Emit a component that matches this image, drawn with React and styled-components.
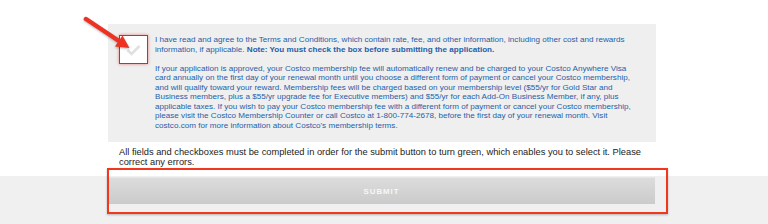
import React from 'react';
import styled, { createGlobalStyle } from 'styled-components';

const GlobalStyle = createGlobalStyle`
  html, body {
    margin: 0;
    padding: 0;
    background: #fff;
  }
  body {
    font-family: "Liberation Sans", Arial, sans-serif;
  }
`;

const Page = styled.div`
  position: relative;
  width: 768px;
  height: 224px;
  overflow: hidden;
  background: #fff;
`;

const TopArea = styled.section`
  padding-top: 24px;
`;

const Panel = styled.div`
  display: flex;
  align-items: flex-start;
  gap: 7px;
  margin-left: 108px;
  width: 548px;
  box-sizing: border-box;
  padding: 11px 0 12px 11px;
  background: #efefef;
`;

const CheckBox = styled.div`
  flex: none;
  display: flex;
  align-items: center;
  justify-content: center;
  width: 29px;
  height: 29px;
  box-sizing: border-box;
  background: #fff;
  border: 1px solid #d8262b;
  box-shadow: 0 0 3px rgba(220, 40, 40, 0.55);
`;

const Terms = styled.div`
  color: #1f5ea8;
  font-size: 8.1px;
  line-height: 9.5px;
`;

const Para = styled.p`
  margin: 0 0 9.5px;
  &:last-child {
    margin-bottom: 0;
  }
`;

const Line = styled.span`
  display: block;
  white-space: nowrap;
`;

const Note = styled.p`
  margin: 5px 0 9px 119px;
  color: #222;
  font-size: 9.3px;
  line-height: 10px;
  white-space: nowrap;
`;

const Footer = styled.section`
  background: #f0f0f0;
  padding-top: 1px;
  height: 48px;
  box-sizing: border-box;
`;

const SubmitButton = styled.button`
  display: block;
  margin-left: 108px;
  width: 547px;
  height: 27px;
  border: none;
  border-top: 1px solid #e6e6e6;
  background: linear-gradient(#dcdcdc, #cbcbcb);
  color: #f7f7f7;
  font-family: "Liberation Sans", Arial, sans-serif;
  font-weight: bold;
  font-size: 7.8px;
  letter-spacing: 1px;
  padding: 0;
`;

const Highlight = styled.div`
  position: absolute;
  left: 107px;
  top: 168px;
  width: 561px;
  height: 46px;
  box-sizing: border-box;
  border: 2px solid #f2371f;
  box-shadow: 0 1px 2px rgba(0, 0, 0, 0.25);
  pointer-events: none;
`;

const ArrowLayer = styled.svg`
  position: absolute;
  left: 0;
  top: 0;
  width: 140px;
  height: 60px;
  overflow: visible;
  filter: drop-shadow(0 1px 1px rgba(0, 0, 0, 0.3));
  pointer-events: none;
`;

const p1 = [
  'I have read and agree to the Terms and Conditions, which contain rate, fee, and other information, including other cost and rewards',
];

const p2 = [
  'If your application is approved, your Costco membership fee will automatically renew and be charged to your Costco Anywhere Visa',
  'card annually on the first day of your renewal month until you choose a different form of payment or cancel your Costco membership,',
  'and will qualify toward your reward. Membership fees will be charged based on your membership level ($55/yr for Gold Star and',
  'Business members, plus a $55/yr upgrade fee for Executive members) and $55/yr for each Add-On Business Member, if any, plus',
  'applicable taxes. If you wish to pay your Costco membership fee with a different form of payment or cancel your Costco membership,',
  'please visit the Costco Membership Counter or call Costco at 1-800-774-2678, before the first day of your renewal month. Visit',
  "costco.com for more information about Costco's membership terms.",
];

const App = () => (
  <Page>
    <GlobalStyle />
    <TopArea>
      <Panel>
        <CheckBox>
          <svg width="15" height="12" viewBox="0 0 15 12">
            <polyline points="1.5,6 5.5,10 13.5,2" fill="none" stroke="#e0e0e0" strokeWidth="2.6" />
          </svg>
        </CheckBox>
        <Terms>
          <Para>
            {p1.map((l, i) => <Line key={i}>{l}</Line>)}
            <Line>
              information, if applicable. <b>Note: You must check the box before submitting the application.</b>
            </Line>
          </Para>
          <Para>
            {p2.map((l, i) => <Line key={i}>{l}</Line>)}
          </Para>
        </Terms>
      </Panel>
      <Note>
        All fields and checkboxes must be completed in order for the submit button to turn green, which enables you to select it. Please
        <br />
        correct any errors.
      </Note>
    </TopArea>
    <Footer>
      <SubmitButton>SUBMIT</SubmitButton>
    </Footer>
    <Highlight />
    <ArrowLayer viewBox="0 0 140 60">
      <line x1="86" y1="19" x2="119" y2="41" stroke="#ec3323" strokeWidth="4.5" strokeLinecap="round" />
      <polygon points="129.5,48 115,46.5 122.5,35.5" fill="#ec3323" />
    </ArrowLayer>
  </Page>
);

export default App;
